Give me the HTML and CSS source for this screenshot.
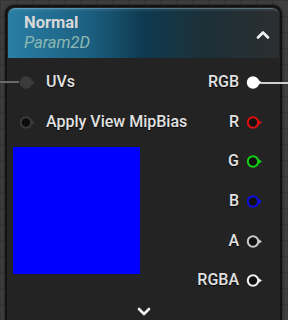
FILE: index.html
```html
<!doctype html>
<html lang="en">
    <head>
        <meta charset="UTF-8" />
        <title>Normal - Param2D</title>
        <link rel="stylesheet" href="styles.css">
    </head>
    <body>
        <div class="node">
            <div class="node-header">
                <div class="titles">
                    <div class="node-title">Normal</div>
                    <div class="node-subtitle">Param2D</div>
                </div>
                <svg class="chevron" width="14" height="9" viewBox="0 0 14 9">
                    <path d="M2 7.5 L7 2.5 L12 7.5" fill="none" stroke="#f2f2f2" stroke-width="2.6" stroke-linecap="round" stroke-linejoin="round"/>
                </svg>
            </div>

            <div class="node-body">
                <div class="inputs">
                    <div class="pin-row">
                        <span class="pin pin-in linked">
                            <svg width="18" height="15" viewBox="0 0 18 15">
                                <circle cx="7" cy="7.5" r="6.2" fill="#3b3b3b"/>
                                <path d="M12.5 5 L16 7.5 L12.5 10 Z" fill="#3b3b3b"/>
                            </svg>
                        </span>
                        <span class="label">UVs</span>
                    </div>
                    <div class="pin-row">
                        <span class="pin pin-in">
                            <svg width="18" height="15" viewBox="0 0 18 15">
                                <circle cx="7" cy="7.5" r="5.2" fill="#0c0c0c" stroke="#3a3a3a" stroke-width="2"/>
                                <path d="M12.5 5 L16 7.5 L12.5 10 Z" fill="#3a3a3a"/>
                            </svg>
                        </span>
                        <span class="label">Apply View MipBias</span>
                    </div>
                    <div class="preview"></div>
                </div>

                <div class="outputs">
                    <div class="pin-row out">
                        <span class="label">RGB</span>
                        <span class="pin pin-out linked">
                            <svg width="18" height="15" viewBox="0 0 18 15">
                                <circle cx="7" cy="7.5" r="6.2" fill="#ffffff"/>
                                <path d="M12.5 5 L16 7.5 L12.5 10 Z" fill="#ffffff"/>
                            </svg>
                        </span>
                    </div>
                    <div class="pin-row out">
                        <span class="label">R</span>
                        <span class="pin pin-out">
                            <svg width="18" height="15" viewBox="0 0 18 15">
                                <circle cx="7" cy="7.5" r="5.2" fill="#111" stroke="#e01010" stroke-width="2"/>
                                <path d="M12.5 5 L16 7.5 L12.5 10 Z" fill="#e01010"/>
                            </svg>
                        </span>
                    </div>
                    <div class="pin-row out">
                        <span class="label">G</span>
                        <span class="pin pin-out">
                            <svg width="18" height="15" viewBox="0 0 18 15">
                                <circle cx="7" cy="7.5" r="5.2" fill="#111" stroke="#10d010" stroke-width="2"/>
                                <path d="M12.5 5 L16 7.5 L12.5 10 Z" fill="#10d010"/>
                            </svg>
                        </span>
                    </div>
                    <div class="pin-row out">
                        <span class="label">B</span>
                        <span class="pin pin-out">
                            <svg width="18" height="15" viewBox="0 0 18 15">
                                <circle cx="7" cy="7.5" r="5.2" fill="#111" stroke="#1010e0" stroke-width="2"/>
                                <path d="M12.5 5 L16 7.5 L12.5 10 Z" fill="#1010e0"/>
                            </svg>
                        </span>
                    </div>
                    <div class="pin-row out">
                        <span class="label">A</span>
                        <span class="pin pin-out">
                            <svg width="18" height="15" viewBox="0 0 18 15">
                                <circle cx="7" cy="7.5" r="5.2" fill="#111" stroke="#c8c8c8" stroke-width="2"/>
                                <path d="M12.5 5 L16 7.5 L12.5 10 Z" fill="#c8c8c8"/>
                            </svg>
                        </span>
                    </div>
                    <div class="pin-row out">
                        <span class="label">RGBA</span>
                        <span class="pin pin-out">
                            <svg width="18" height="15" viewBox="0 0 18 15">
                                <circle cx="7" cy="7.5" r="5.2" fill="#111" stroke="#f0f0f0" stroke-width="2"/>
                                <path d="M12.5 5 L16 7.5 L12.5 10 Z" fill="#f0f0f0"/>
                            </svg>
                        </span>
                    </div>
                </div>
            </div>

            <div class="node-footer">
                <svg width="14" height="9" viewBox="0 0 14 9">
                    <path d="M2 2 L7 7 L12 2" fill="none" stroke="#f2f2f2" stroke-width="2.6" stroke-linecap="round" stroke-linejoin="round"/>
                </svg>
            </div>
        </div>
    </body>
</html>
```

FILE: styles.css
```css
body {
    margin: 0;
    height: 320px;
    overflow: hidden;
    font-family: Roboto, "Liberation Sans", sans-serif;
    background-color: #3e3e3e;
    background-image:
        linear-gradient(to right, rgba(0, 0, 0, 0.12) 1px, transparent 1px),
        linear-gradient(to bottom, rgba(0, 0, 0, 0.12) 1px, transparent 1px);
    background-size: 16px 16px;
    padding: 5px 6px 0 5px;
    box-sizing: border-box;
}
.node {
    position: relative;
    box-sizing: border-box;
    height: 315px;
    background-color: #232323;
    border: 2px solid #121212;
    border-bottom: none;
    border-radius: 9px 9px 0 0;
    padding: 1px;
    box-shadow: 0 0 3px rgba(0, 0, 0, 0.6);
}
.node-header {
    height: 50px;
    border-radius: 7px 7px 0 0;
    display: flex;
    align-items: center;
    justify-content: space-between;
    padding: 0 9px 0 16px;
    background:
        linear-gradient(to bottom, rgba(255, 255, 255, 0.12) 0, rgba(255, 255, 255, 0) 4px),
        linear-gradient(to right, #2a7ea4 0%, #1b5f80 30%, #0f3a50 50%, #1c3038 72%, #2b2e30 100%);
    box-shadow: inset 0 1px 0 rgba(150, 200, 230, 0.35);
}
.titles {
    display: flex;
    flex-direction: column;
    gap: 1px;
    margin-top: -2px;
}
.node-title {
    color: #d8d8d8;
    font-size: 16.5px;
    font-weight: bold;
    line-height: 19px;
}
.node-subtitle {
    color: #8cb8b2;
    font-size: 16.5px;
    font-style: italic;
    line-height: 19px;
}
.chevron {
    display: block;
    margin-top: 2px;
}
.node-body {
    display: flex;
    justify-content: space-between;
    padding-top: 4px;
}
.inputs {
    display: flex;
    flex-direction: column;
}
.outputs {
    display: flex;
    flex-direction: column;
    align-items: flex-end;
    padding-right: 15px;
}
.pin-row {
    height: 39.6px;
    display: flex;
    align-items: center;
    gap: 9px;
    padding-left: 11px;
}
.pin-row.out {
    gap: 7px;
    padding-left: 0;
}
.label {
    color: #e2e2e2;
    font-size: 16px;
    font-weight: 500;
    text-shadow: 0 1px 1px rgba(0, 0, 0, 0.8);
}
.pin {
    position: relative;
    display: flex;
    margin-top: 2px;
}
.pin svg {
    display: block;
}
/* wires leaving the node */
.pin-in.linked::before {
    content: "";
    position: absolute;
    right: 100%;
    top: 6px;
    width: 24px;
    height: 2px;
    background-color: #6a6a6a;
}
.pin-out.linked::after {
    content: "";
    position: absolute;
    left: 15px;
    top: 7px;
    width: 40px;
    height: 2px;
    background-color: #cfcfcf;
}
.preview {
    width: 127px;
    height: 127px;
    background-color: #0000ff;
    margin: 6px 0 0 5px;
}
.node-footer {
    position: absolute;
    left: 0;
    right: 0;
    top: 300px;
    display: flex;
    justify-content: center;
}
```
